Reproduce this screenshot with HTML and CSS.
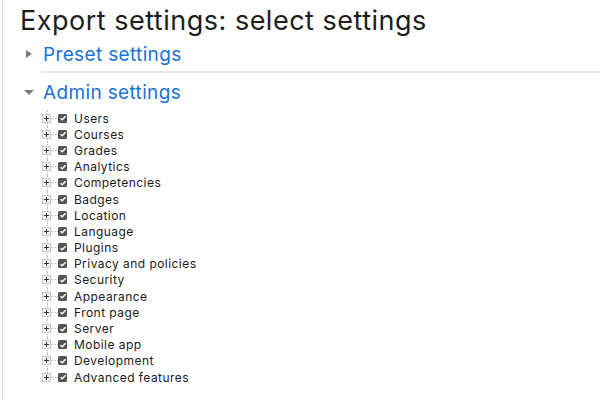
FILE: index.html
```html
<!DOCTYPE html>
<html>
<head>
<meta charset="utf-8">
<link rel="stylesheet" href="styles.css">
</head>
<body>
<div class="page">
  <h1 class="title">Export settings: select settings</h1>
  <div class="section collapsed">
    <div class="section-head"><span class="tri tri-right"></span><span class="section-title">Preset settings</span></div>
  </div>
  <div class="section">
    <div class="section-head"><span class="tri tri-down"></span><span class="section-title">Admin settings</span></div>
    <ul class="tree">
      <li><span class="plus"></span><span class="cb"><svg viewBox="0 0 8 8" width="8" height="8"><path d="M1.5 4.2 L3.2 5.8 L6.6 2.2" fill="none" stroke="#fff" stroke-width="1.4"/></svg></span><span class="label">Users</span></li>
      <li><span class="plus"></span><span class="cb"><svg viewBox="0 0 8 8" width="8" height="8"><path d="M1.5 4.2 L3.2 5.8 L6.6 2.2" fill="none" stroke="#fff" stroke-width="1.4"/></svg></span><span class="label">Courses</span></li>
      <li><span class="plus"></span><span class="cb"><svg viewBox="0 0 8 8" width="8" height="8"><path d="M1.5 4.2 L3.2 5.8 L6.6 2.2" fill="none" stroke="#fff" stroke-width="1.4"/></svg></span><span class="label">Grades</span></li>
      <li><span class="plus"></span><span class="cb"><svg viewBox="0 0 8 8" width="8" height="8"><path d="M1.5 4.2 L3.2 5.8 L6.6 2.2" fill="none" stroke="#fff" stroke-width="1.4"/></svg></span><span class="label">Analytics</span></li>
      <li><span class="plus"></span><span class="cb"><svg viewBox="0 0 8 8" width="8" height="8"><path d="M1.5 4.2 L3.2 5.8 L6.6 2.2" fill="none" stroke="#fff" stroke-width="1.4"/></svg></span><span class="label">Competencies</span></li>
      <li><span class="plus"></span><span class="cb"><svg viewBox="0 0 8 8" width="8" height="8"><path d="M1.5 4.2 L3.2 5.8 L6.6 2.2" fill="none" stroke="#fff" stroke-width="1.4"/></svg></span><span class="label">Badges</span></li>
      <li><span class="plus"></span><span class="cb"><svg viewBox="0 0 8 8" width="8" height="8"><path d="M1.5 4.2 L3.2 5.8 L6.6 2.2" fill="none" stroke="#fff" stroke-width="1.4"/></svg></span><span class="label">Location</span></li>
      <li><span class="plus"></span><span class="cb"><svg viewBox="0 0 8 8" width="8" height="8"><path d="M1.5 4.2 L3.2 5.8 L6.6 2.2" fill="none" stroke="#fff" stroke-width="1.4"/></svg></span><span class="label">Language</span></li>
      <li><span class="plus"></span><span class="cb"><svg viewBox="0 0 8 8" width="8" height="8"><path d="M1.5 4.2 L3.2 5.8 L6.6 2.2" fill="none" stroke="#fff" stroke-width="1.4"/></svg></span><span class="label">Plugins</span></li>
      <li><span class="plus"></span><span class="cb"><svg viewBox="0 0 8 8" width="8" height="8"><path d="M1.5 4.2 L3.2 5.8 L6.6 2.2" fill="none" stroke="#fff" stroke-width="1.4"/></svg></span><span class="label">Privacy and policies</span></li>
      <li><span class="plus"></span><span class="cb"><svg viewBox="0 0 8 8" width="8" height="8"><path d="M1.5 4.2 L3.2 5.8 L6.6 2.2" fill="none" stroke="#fff" stroke-width="1.4"/></svg></span><span class="label">Security</span></li>
      <li><span class="plus"></span><span class="cb"><svg viewBox="0 0 8 8" width="8" height="8"><path d="M1.5 4.2 L3.2 5.8 L6.6 2.2" fill="none" stroke="#fff" stroke-width="1.4"/></svg></span><span class="label">Appearance</span></li>
      <li><span class="plus"></span><span class="cb"><svg viewBox="0 0 8 8" width="8" height="8"><path d="M1.5 4.2 L3.2 5.8 L6.6 2.2" fill="none" stroke="#fff" stroke-width="1.4"/></svg></span><span class="label">Front page</span></li>
      <li><span class="plus"></span><span class="cb"><svg viewBox="0 0 8 8" width="8" height="8"><path d="M1.5 4.2 L3.2 5.8 L6.6 2.2" fill="none" stroke="#fff" stroke-width="1.4"/></svg></span><span class="label">Server</span></li>
      <li><span class="plus"></span><span class="cb"><svg viewBox="0 0 8 8" width="8" height="8"><path d="M1.5 4.2 L3.2 5.8 L6.6 2.2" fill="none" stroke="#fff" stroke-width="1.4"/></svg></span><span class="label">Mobile app</span></li>
      <li><span class="plus"></span><span class="cb"><svg viewBox="0 0 8 8" width="8" height="8"><path d="M1.5 4.2 L3.2 5.8 L6.6 2.2" fill="none" stroke="#fff" stroke-width="1.4"/></svg></span><span class="label">Development</span></li>
      <li><span class="plus"></span><span class="cb"><svg viewBox="0 0 8 8" width="8" height="8"><path d="M1.5 4.2 L3.2 5.8 L6.6 2.2" fill="none" stroke="#fff" stroke-width="1.4"/></svg></span><span class="label">Advanced features</span></li>
    </ul>
  </div>
</div>
</body>
</html>
```
FILE: styles.css
```css
html, body {
  margin: 0;
  padding: 0;
  background: #fff;
}
body {
  font-family: Inter, "Liberation Sans", Arial, sans-serif;
  color: #222;
}
.page {
  margin-left: 2px;
  border-left: 1px solid #dcdcdc;
  height: 400px;
  box-sizing: border-box;
  padding: 4px 0 0 17px;
}
.title {
  margin: 0;
  font-weight: 400;
  font-size: 27px;
  line-height: 34px;
  color: #1d1d1d;
  letter-spacing: 0.5px;
}
.section-head {
  display: flex;
  align-items: center;
  height: 30px;
}
.section.collapsed {
  padding-bottom: 2px;
  padding-top: 1px;
}
.section.collapsed + .section {
  margin-left: 21px;
  border-top: 2px solid #e8e8e8;
  padding-top: 4px;
}
.section.collapsed + .section .section-head {
  margin-left: -21px;
}
.section.collapsed + .section .tree {
  margin-left: -21px;
}
.tri {
  width: 0;
  height: 0;
  margin: 0 11px 0 6px;
}
.tri-right {
  border-top: 4.5px solid transparent;
  border-bottom: 4.5px solid transparent;
  border-left: 6px solid #7b7b7b;
}
.tri-down {
  border-left: 5px solid transparent;
  border-right: 5px solid transparent;
  border-top: 5px solid #7b7b7b;
  margin-left: 4px;
  margin-right: 9px;
}
.section-title {
  font-size: 19px;
  color: #1a73d4;
  letter-spacing: 0.35px;
}
.tree {
  list-style: none;
  margin: 3px 0 0 0;
  padding: 0 0 0 22px;
}
.tree li {
  display: flex;
  align-items: center;
  height: 16.2px;
  position: relative;
}
.tree li::before {
  content: "";
  position: absolute;
  left: 5px;
  top: 0;
  bottom: 0;
  border-left: 1px dotted #bbb;
}
.tree li:last-child::before {
  bottom: 50%;
}
.plus {
  position: relative;
  width: 9px;
  height: 9px;
  border: 1px solid #c8c8c8;
  background: #f4f4f4;
  box-sizing: border-box;
  z-index: 1;
}
.plus::before {
  content: "";
  position: absolute;
  left: 1px;
  right: 1px;
  top: 3px;
  height: 1px;
  background: #333;
}
.plus::after {
  content: "";
  position: absolute;
  top: 1px;
  bottom: 1px;
  left: 3px;
  width: 1px;
  background: #333;
}
.cb {
  margin-left: 7px;
  width: 9px;
  height: 9px;
  background: #555;
  border-radius: 1.5px;
  display: flex;
  align-items: center;
  justify-content: center;
  position: relative;
}
.cb::before {
  content: "";
  position: absolute;
  left: -7px;
  width: 7px;
  top: 4px;
  border-top: 1px dotted #bbb;
}
.label {
  margin-left: 7px;
  font-size: 12px;
  color: #1a1a1a;
  letter-spacing: 0.45px;
}
```
